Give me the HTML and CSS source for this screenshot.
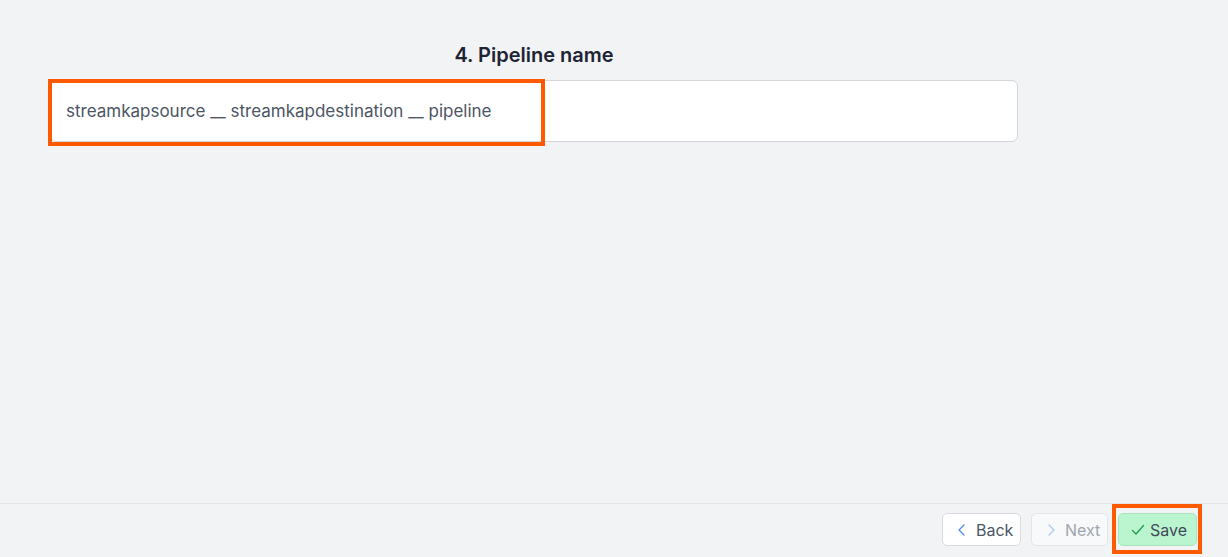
FILE: index.html
```html
<!DOCTYPE html>
<html lang="en">
<head>
<meta charset="utf-8">
<title>Pipeline name</title>
<link rel="stylesheet" href="styles.css">
</head>
<body>
<div class="page">
  <main class="content">
    <section class="step">
      <h2 class="step-title">4. Pipeline name</h2>
      <div class="field">
        <input class="text-input" type="text" value="streamkapsource __ streamkapdestination __ pipeline">
        <span class="highlight highlight-input"></span>
      </div>
    </section>
  </main>
  <footer class="footer">
    <button class="btn btn-back" type="button">
      <svg class="ico" viewBox="0 0 16 16" width="16" height="16"><path d="M10 3 L5 8 L10 13" fill="none" stroke="currentColor" stroke-width="1.3" stroke-linecap="round" stroke-linejoin="round"/></svg>
      <span>Back</span>
    </button>
    <button class="btn btn-next" type="button" disabled>
      <svg class="ico" viewBox="0 0 16 16" width="16" height="16"><path d="M6 3 L11 8 L6 13" fill="none" stroke="currentColor" stroke-width="1.3" stroke-linecap="round" stroke-linejoin="round"/></svg>
      <span>Next</span>
    </button>
    <div class="save-wrap">
      <button class="btn btn-save" type="button">
        <svg class="ico" viewBox="0 0 16 16" width="16" height="16"><path d="M2.5 8.5 L6 12 L13.5 3.5" fill="none" stroke="currentColor" stroke-width="1.3" stroke-linecap="round" stroke-linejoin="round"/></svg>
        <span>Save</span>
      </button>
      <span class="highlight highlight-save"></span>
    </div>
  </footer>
</div>
</body>
</html>
```
FILE: styles.css
```css
* { box-sizing: border-box; }
html, body {
  margin: 0;
  padding: 0;
  height: 100%;
}
body {
  background: #f2f3f5;
  font-family: Inter, "Noto Sans", "Liberation Sans", sans-serif;
  color: #374151;
}
.page {
  height: 557px;
  display: flex;
  flex-direction: column;
}
.content {
  flex: 1;
  padding: 43px 0 0 50px;
}
.step {
  width: 968px;
  display: flex;
  flex-direction: column;
  align-items: center;
}
.step-title {
  margin: 0 0 13px 0;
  font-size: 20px;
  line-height: 24px;
  font-weight: 600;
  color: #1e2433;
}
.field {
  position: relative;
  width: 100%;
}
.text-input {
  display: block;
  width: 100%;
  height: 62px;
  margin: 0;
  padding: 0 15px;
  border: 1px solid #d4d6dc;
  border-radius: 6px;
  background: #ffffff;
  font-family: inherit;
  font-size: 17px;
  color: #4b5563;
  outline: none;
}
.highlight {
  position: absolute;
  border: 4px solid #ff5a00;
  pointer-events: none;
}
.highlight-input {
  left: -2px;
  top: -1px;
  width: 497px;
  height: 67px;
}
.footer {
  height: 54px;
  border-top: 1px solid #e3e5e9;
  display: flex;
  justify-content: flex-end;
  align-items: flex-start;
  gap: 10px;
  padding: 9px 31px 0 0;
}
.btn {
  height: 33px;
  display: inline-flex;
  align-items: center;
  gap: 6px;
  padding: 0 11px;
  border: 1px solid #d8dbe0;
  border-radius: 5px;
  background: #ffffff;
  font-family: inherit;
  font-size: 16px;
  color: #4b5563;
  cursor: pointer;
}
.btn .ico { flex: none; }
.btn-back { width: 79px; }
.btn-back .ico { color: #4a8ff5; }
.btn-next {
  width: 77px;
  background: #f8f9fa;
  border-color: #e3e5e9;
  color: #a0a5ad;
  cursor: default;
}
.btn-next .ico { color: #a9c8f5; }
.save-wrap {
  position: relative;
}
.btn-save {
  width: 79px;
  gap: 4px;
  background: #bbf5d0;
  border-color: #a9e3be;
  color: #3f4a5a;
}
.btn-save .ico { color: #1f9e4d; }
.highlight-save {
  left: -6px;
  top: -9px;
  width: 90px;
  height: 50px;
}
```
